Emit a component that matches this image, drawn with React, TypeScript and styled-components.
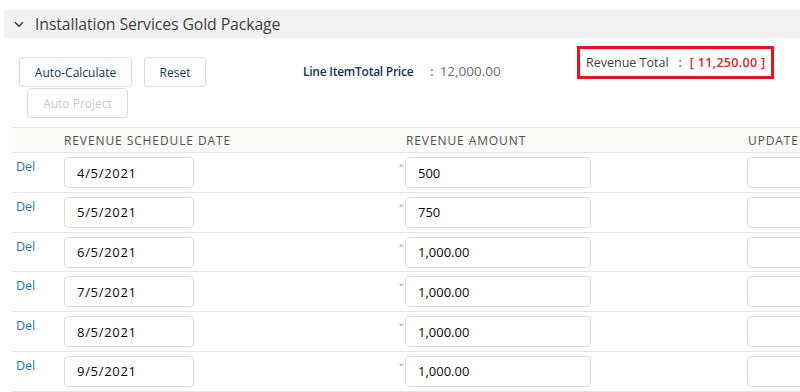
import styled, { createGlobalStyle } from 'styled-components';

const GlobalStyle = createGlobalStyle`
  html, body {
    margin: 0;
    padding: 0;
    background: #ffffff;
    overflow: hidden;
  }
  body {
    font-family: 'Open Sans', 'Noto Sans', Arial, sans-serif;
    color: #3e3e3c;
  }
`;

interface ScheduleRow {
  date: string;
  amount: string;
}

const rows: ScheduleRow[] = [
  { date: '4/5/2021', amount: '500' },
  { date: '5/5/2021', amount: '750' },
  { date: '6/5/2021', amount: '1,000.00' },
  { date: '7/5/2021', amount: '1,000.00' },
  { date: '8/5/2021', amount: '1,000.00' },
  { date: '9/5/2021', amount: '1,000.00' },
];

const Page = styled.div`
  width: 800px;
  height: 392px;
  padding-top: 10px;
  box-sizing: border-box;
  overflow: hidden;
`;

const SectionHeader = styled.div`
  margin-left: 4px;
  height: 28px;
  background: #f3f2f2;
  display: flex;
  align-items: center;
  gap: 11px;
  padding-left: 10px;
`;

const SectionTitle = styled.span`
  font-size: 15.8px;
  color: #3e3e3c;
  letter-spacing: -0.1px;
`;

const Toolbar = styled.div`
  height: 89px;
  display: grid;
  grid-template-columns: 284px 274px auto;
  align-items: start;
  padding-left: 19px;
`;

const ButtonStack = styled.div`
  display: flex;
  flex-direction: column;
  padding-top: 18px;
`;

const ButtonRow = styled.div<{ $indent?: number }>`
  display: flex;
  gap: 12px;
  padding-left: ${({ $indent }) => $indent || 0}px;
  margin-top: 1px;
`;

const Button = styled.button<{ $width: number; $disabled?: boolean }>`
  width: ${({ $width }) => $width}px;
  height: 30px;
  box-sizing: border-box;
  background: #ffffff;
  border: 1px solid #dddbda;
  border-radius: 4px;
  font-family: inherit;
  font-size: 12px;
  color: ${({ $disabled }) => ($disabled ? '#c9c7c5' : '#16325c')};
  padding: 0;
`;

const PriceInfo = styled.div`
  padding-top: 18px;
  height: 30px;
  display: flex;
  align-items: center;
  white-space: nowrap;
`;

const PriceLabel = styled.span`
  font-size: 12px;
  font-weight: 600;
  letter-spacing: -0.25px;
  color: #16325c;
`;

const Colon = styled.span<{ $left: number; $right: number }>`
  margin: 0 ${({ $right }) => $right}px 0 ${({ $left }) => $left}px;
  font-size: 12.5px;
  color: #3e3e3c;
`;

const PriceValue = styled.span`
  font-size: 13.5px;
  color: #706e6b;
`;

const TotalBox = styled.div`
  margin-top: 8px;
  width: 197px;
  height: 33px;
  box-sizing: border-box;
  border: 3px solid #e3141b;
  display: flex;
  align-items: center;
  padding-left: 6px;
  white-space: nowrap;
`;

const TotalLabel = styled.span`
  font-size: 12.5px;
  color: #3e3e3c;
`;

const TotalValue = styled.span`
  font-size: 12.5px;
  color: #dc1f26;
  font-weight: 600;
  letter-spacing: 0.3px;
`;

const Table = styled.div`
  margin-left: 12px;
  border-top: 1px solid #e5e5e5;
`;

const Row = styled.div<{ $header?: boolean }>`
  display: grid;
  grid-template-columns: 48px 337px 346px 1fr;
  height: ${({ $header }) => ($header ? '24px' : '38.8px')};
  background: ${({ $header }) => ($header ? '#fafaf9' : '#ffffff')};
  border-bottom: 1px solid #e5e5e5;
  align-items: ${({ $header }) => ($header ? 'center' : 'start')};
`;

const HeaderCell = styled.div<{ $pad: number }>`
  padding-left: ${({ $pad }) => $pad}px;
  font-size: 12px;
  letter-spacing: 0.9px;
  color: #514f4d;
  white-space: nowrap;
  overflow: hidden;
`;

const DelLink = styled.a`
  padding: 5px 0 0 4px;
  font-size: 12.5px;
  color: #1b75c4;
`;

const Cell = styled.div<{ $pad: number }>`
  padding: 4px 0 0 ${({ $pad }) => $pad}px;
  display: flex;
  align-items: flex-start;
  white-space: nowrap;
  overflow: hidden;
`;

const Required = styled.span`
  width: 6px;
  padding-top: 3px;
  font-size: 8px;
  color: #d88a88;
`;

const Input = styled.div<{ $width: number; $spaced?: boolean }>`
  width: ${({ $width }) => $width}px;
  height: 31px;
  box-sizing: border-box;
  border: 1px solid #dddbda;
  border-radius: 4px;
  padding-left: 12px;
  display: flex;
  align-items: center;
  font-size: 13px;
  letter-spacing: ${({ $spaced }) => ($spaced ? '0.7px' : '0')};
  color: #080707;
  flex-shrink: 0;
`;

const Chevron = () => (
  <svg width="10" height="7" viewBox="0 0 10 7">
    <path d="M1 1.2 L5 5.2 L9 1.2" fill="none" stroke="#3e3e3c" strokeWidth="1.6" />
  </svg>
);

export default function App() {
  return (
    <Page>
      <GlobalStyle />
      <SectionHeader>
        <Chevron />
        <SectionTitle>Installation Services Gold Package</SectionTitle>
      </SectionHeader>
      <Toolbar>
        <ButtonStack>
          <ButtonRow>
            <Button $width={113}>Auto-Calculate</Button>
            <Button $width={62}>Reset</Button>
          </ButtonRow>
          <ButtonRow $indent={8}>
            <Button $width={101} $disabled>Auto Project</Button>
          </ButtonRow>
        </ButtonStack>
        <PriceInfo>
          <PriceLabel>Line ItemTotal Price</PriceLabel>
          <Colon $left={17} $right={6}>:</Colon>
          <PriceValue>12,000.00</PriceValue>
        </PriceInfo>
        <TotalBox>
          <TotalLabel>Revenue Total</TotalLabel>
          <Colon $left={10} $right={8}>:</Colon>
          <TotalValue>[ 11,250.00 ]</TotalValue>
        </TotalBox>
      </Toolbar>
      <Table>
        <Row $header>
          <HeaderCell $pad={0}></HeaderCell>
          <HeaderCell $pad={4}>REVENUE SCHEDULE DATE</HeaderCell>
          <HeaderCell $pad={9}>REVENUE AMOUNT</HeaderCell>
          <HeaderCell $pad={5}>UPDATED</HeaderCell>
        </Row>
        {rows.map((r) => (
          <Row key={r.date}>
            <DelLink>Del</DelLink>
            <Cell $pad={4}>
              <Input $width={130} $spaced>{r.date}</Input>
            </Cell>
            <Cell $pad={2}>
              <Required>*</Required>
              <Input $width={186}>{r.amount}</Input>
            </Cell>
            <Cell $pad={4}>
              <Input $width={120}></Input>
            </Cell>
          </Row>
        ))}
      </Table>
    </Page>
  );
}
